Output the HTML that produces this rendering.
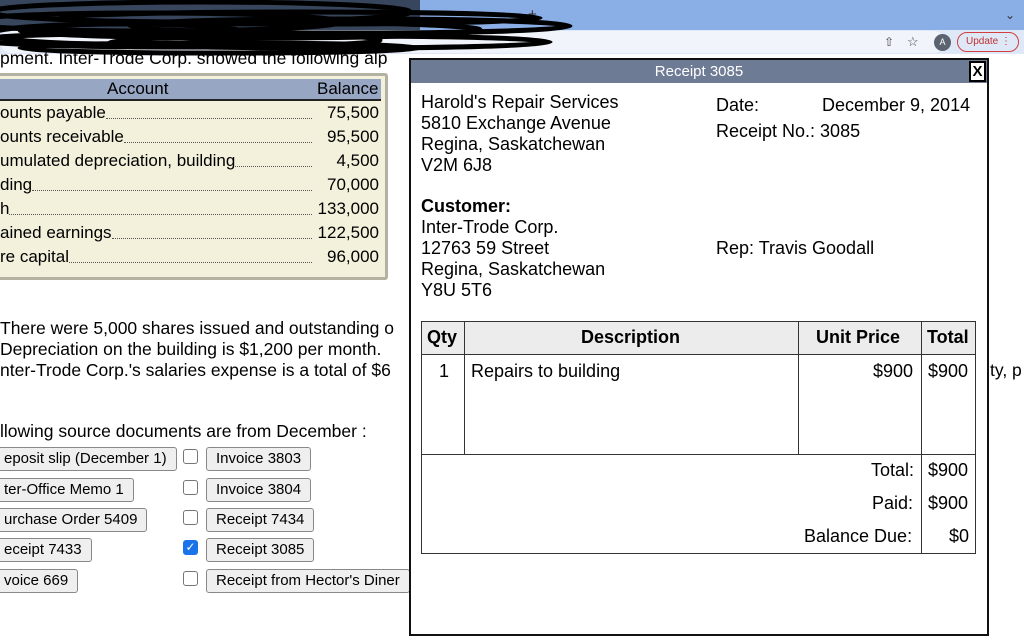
<!DOCTYPE html>
<html><head><meta charset="utf-8"><style>
*{margin:0;padding:0;box-sizing:border-box}
body{width:1024px;height:640px;overflow:hidden;background:#fff;font-family:"Liberation Sans",Arial,sans-serif;color:#000;position:relative}
.a{position:absolute;white-space:nowrap}
.t{font-size:17.5px}
.btn{position:absolute;height:24px;border:1px solid #888;border-radius:3px;background:#efefef;font-size:15px;line-height:22px;padding:0 9px;white-space:nowrap}
.cb{position:absolute;width:15px;height:15px;border:1px solid #767676;border-radius:3px;background:#fff}
.row{position:absolute;left:0;width:379px;height:24px;font-size:17px;line-height:24px;display:flex}
.row .l{flex:none}
.row .d{flex:1;border-bottom:1px dotted #555;height:18px;margin-right:67px}
.row .v{position:absolute;right:0;top:0}
.m{font-size:18px}
</style></head><body>
<div class="a" style="left:0;top:0;width:1024px;height:30px;background:#8aaee6"></div>
<div class="a" style="left:0;top:30px;width:1024px;height:24px;background:#dfe8f7"></div>
<div class="a" style="left:0;top:31px;width:945px;height:22px;background:#f1f4fa;border-radius:11px"></div>
<div class="a" style="left:1005px;top:8px;font-size:12px;color:#333">⌄</div>
<div class="a" style="left:528px;top:6px;font-size:15px;color:#333">+</div>
<div class="a" style="left:884px;top:35px;font-size:12px;color:#444">⇧</div>
<div class="a" style="left:907px;top:34px;font-size:13px;color:#444">☆</div>
<div class="a" style="left:934px;top:34px;width:17px;height:17px;border-radius:50%;background:#5b6270;color:#fff;font-size:9px;text-align:center;line-height:17px">A</div>
<div class="a" style="left:957px;top:32px;width:62px;height:20px;border:1px solid #d04040;border-radius:10px;color:#c03030;font-size:10px;line-height:18px;padding-left:8px">Update ⋮</div>
<svg class="a" style="left:0;top:0" width="600" height="60">
<g fill="none" stroke="#000" stroke-width="5">
<ellipse cx="200" cy="12" rx="210" ry="10"/><ellipse cx="150" cy="22" rx="190" ry="9"/><ellipse cx="250" cy="30" rx="230" ry="8"/><ellipse cx="180" cy="40" rx="200" ry="7"/><ellipse cx="220" cy="48" rx="200" ry="5"/><ellipse cx="300" cy="18" rx="240" ry="6"/><ellipse cx="120" cy="34" rx="130" ry="10"/><ellipse cx="350" cy="26" rx="220" ry="7"/><ellipse cx="330" cy="42" rx="220" ry="6"/>
</g><rect x="0" y="0" width="420" height="30" fill="#000" opacity=".6"/></svg>
<div class="a t" style="left:0;top:48px;line-height:20px">pment. Inter-Trode Corp. showed the following alp</div>

<div class="a" style="left:-4px;top:73px;width:392px;height:207px;background:#f3f1dc;border:3px solid #b3b2a2;border-radius:3px"></div>
<div class="a" style="left:0;top:79px;width:381px;height:22px;background:#97a6c3;border-bottom:2px solid #222"></div>
<div class="a" style="left:107px;top:79px;font-size:17px">Account</div>
<div class="a" style="left:317px;top:79px;font-size:17px">Balance</div>
<div class="row" style="top:101px"><span class="l">ounts payable</span><span class="d"></span><span class="v">75,500</span></div>
<div class="row" style="top:125px"><span class="l">ounts receivable</span><span class="d"></span><span class="v">95,500</span></div>
<div class="row" style="top:149px"><span class="l">umulated depreciation, building</span><span class="d"></span><span class="v">4,500</span></div>
<div class="row" style="top:173px"><span class="l">ding</span><span class="d"></span><span class="v">70,000</span></div>
<div class="row" style="top:197px"><span class="l">h</span><span class="d"></span><span class="v">133,000</span></div>
<div class="row" style="top:221px"><span class="l">ained earnings</span><span class="d"></span><span class="v">122,500</span></div>
<div class="row" style="top:245px"><span class="l">re capital</span><span class="d"></span><span class="v">96,000</span></div>

<div class="a t" style="left:0;top:318px;line-height:21px">There were 5,000 shares issued and outstanding o<br>Depreciation on the building is $1,200 per month.<br>nter-Trode Corp.'s salaries expense is a total of $6</div>
<div class="a t" style="left:990px;top:360px">ty, p</div>
<div class="a t" style="left:0;top:421px">llowing source documents are from December :</div>

<div class="btn" style="left:-6px;top:447px">eposit slip (December 1)</div>
<div class="btn" style="left:-6px;top:478px">ter-Office Memo 1</div>
<div class="btn" style="left:-6px;top:508px">urchase Order 5409</div>
<div class="btn" style="left:-6px;top:538px">eceipt 7433</div>
<div class="btn" style="left:-6px;top:569px">voice 669</div>
<div class="cb" style="left:183px;top:449px"></div>
<div class="cb" style="left:183px;top:480px"></div>
<div class="cb" style="left:183px;top:510px"></div>
<div class="cb" style="left:183px;top:540px;background:#1a73e8;border-color:#1a73e8;color:#fff;font-size:12px;line-height:13px;text-align:center">✓</div>
<div class="cb" style="left:183px;top:571px"></div>
<div class="btn" style="left:206px;top:447px">Invoice 3803</div>
<div class="btn" style="left:206px;top:478px">Invoice 3804</div>
<div class="btn" style="left:206px;top:508px">Receipt 7434</div>
<div class="btn" style="left:206px;top:538px">Receipt 3085</div>
<div class="btn" style="left:206px;top:569px">Receipt from Hector's Diner</div>

<div class="a" style="left:409px;top:58px;width:580px;height:578px;background:#fff;border:2px solid #111"></div>
<div class="a" style="left:411px;top:60px;width:576px;height:23px;background:#6e7b95;color:#fff;font-size:15px;text-align:center;line-height:23px">Receipt 3085</div>
<div class="a" style="left:969px;top:61px;width:17px;height:21px;background:#fff;border:2px solid #000;font-size:15px;font-weight:bold;text-align:center;line-height:18px">X</div>
<div class="a m" style="left:421px;top:92px;line-height:21px">Harold's Repair Services<br>5810 Exchange Avenue<br>Regina, Saskatchewan<br>V2M 6J8</div>
<div class="a m" style="left:716px;top:95px">Date:</div>
<div class="a m" style="left:822px;top:95px">December 9, 2014</div>
<div class="a m" style="left:716px;top:121px">Receipt No.: 3085</div>
<div class="a m" style="left:421px;top:196px;line-height:21px"><b>Customer:</b><br>Inter-Trode Corp.<br>12763 59 Street<br>Regina, Saskatchewan<br>Y8U 5T6</div>
<div class="a m" style="left:716px;top:238px">Rep: Travis Goodall</div>

<div class="a" style="left:421px;top:321px;width:555px;height:233px;border:1px solid #333"></div>
<div class="a" style="left:422px;top:322px;width:553px;height:33px;background:#ececec;border-bottom:1px solid #333"></div>
<div class="a" style="left:464px;top:322px;width:1px;height:132px;background:#333"></div>
<div class="a" style="left:798px;top:322px;width:1px;height:132px;background:#333"></div>
<div class="a" style="left:921px;top:322px;width:1px;height:132px;background:#333"></div>
<div class="a" style="left:421px;top:454px;width:555px;height:1px;background:#333"></div>
<div class="a" style="left:921px;top:454px;width:1px;height:100px;background:#333"></div>
<div class="a m" style="left:427px;top:327px;font-weight:bold">Qty</div>
<div class="a m" style="left:581px;top:327px;font-weight:bold">Description</div>
<div class="a m" style="left:816px;top:327px;font-weight:bold">Unit Price</div>
<div class="a m" style="left:927px;top:327px;font-weight:bold">Total</div>
<div class="a m" style="left:439px;top:361px">1</div>
<div class="a m" style="left:471px;top:361px">Repairs to building</div>
<div class="a m" style="left:873px;top:361px">$900</div>
<div class="a m" style="left:928px;top:361px">$900</div>
<div class="a m" style="left:871px;top:460px">Total:</div>
<div class="a m" style="left:928px;top:460px">$900</div>
<div class="a m" style="left:872px;top:493px">Paid:</div>
<div class="a m" style="left:928px;top:493px">$900</div>
<div class="a m" style="left:804px;top:526px">Balance Due:</div>
<div class="a m" style="left:949px;top:526px">$0</div>
</body></html>
